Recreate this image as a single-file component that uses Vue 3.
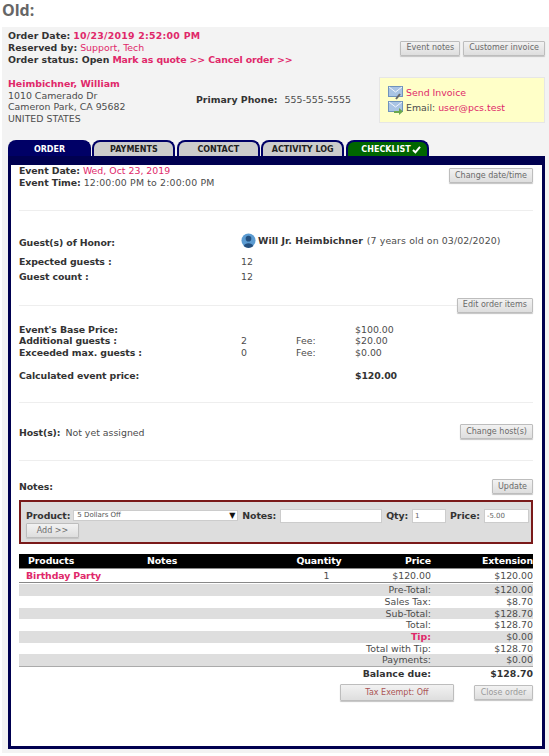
<script setup>
const tabs = [
  { name: 'ORDER', cls: 'active' },
  { name: 'PAYMENTS', cls: '' },
  { name: 'CONTACT', cls: '' },
  { name: 'ACTIVITY LOG', cls: '' },
  { name: 'CHECKLIST', cls: 'done', check: true },
]

const fees = [
  { label: "Event's Base Price:", qty: '', fee: '', price: '$100.00' },
  { label: 'Additional guests :', qty: '2', fee: 'Fee:', price: '$20.00' },
  { label: 'Exceeded max. guests :', qty: '0', fee: 'Fee:', price: '$0.00' },
]

const totals = [
  { label: 'Pre-Total:', value: '$120.00', cls: 'shade first' },
  { label: 'Sales Tax:', value: '$8.70', cls: '' },
  { label: 'Sub-Total:', value: '$128.70', cls: 'shade' },
  { label: 'Total:', value: '$128.70', cls: '' },
  { label: 'Tip:', value: '$0.00', cls: 'shade tip' },
  { label: 'Total with Tip:', value: '$128.70', cls: '' },
  { label: 'Payments:', value: '$0.00', cls: 'shade last' },
  { label: 'Balance due:', value: '$128.70', cls: 'balance' },
]
</script>

<template>
  <div class="page">
    <h2 class="title">Old:</h2>
    <div class="panel">
      <div class="top">
        <div class="lines">
          <div><b>Order Date:</b> <b class="pink date">10/23/2019 2:52:00 PM</b></div>
          <div><b>Reserved by:</b> <span class="pink">Support, Tech</span></div>
          <div><b>Order status: Open</b> <b class="pink links">Mark as quote &gt;&gt; Cancel order &gt;&gt;</b></div>
        </div>
        <div class="top-btns">
          <button class="btn">Event notes</button>
          <button class="btn">Customer invoice</button>
        </div>
      </div>

      <div class="customer">
        <div class="address">
          <b class="pink">Heimbichner, William</b>
          <div>1010 Camerado Dr</div>
          <div>Cameron Park, CA 95682</div>
          <div>UNITED STATES</div>
        </div>
        <div class="phone"><b>Primary Phone:</b><span>555-555-5555</span></div>
        <div class="invoice">
          <div class="inv-row">
            <svg width="15" height="14" viewBox="0 0 15 14">
              <rect x="0.5" y="0.5" width="14" height="10" fill="#a9c4e4" stroke="#6f93bd" />
              <path d="M1 1l6.5 5L14 1" fill="none" stroke="#f2f6fb" />
              <path d="M8 13l4-5" stroke="#666" stroke-width="2" />
            </svg>
            <span class="pink">Send Invoice</span>
          </div>
          <div class="inv-row">
            <svg width="15" height="14" viewBox="0 0 15 14">
              <rect x="0.5" y="0.5" width="14" height="10" fill="#a9c4e4" stroke="#6f93bd" />
              <path d="M1 1l6.5 5L14 1" fill="none" stroke="#f2f6fb" />
              <path d="M6 10h5V7l4 3.5-4 3.5v-2H6z" fill="#6aa84f" />
            </svg>
            <span>Email: <span class="pink">user@pcs.test</span></span>
          </div>
        </div>
      </div>

      <div class="tabs">
        <div v-for="t in tabs" :key="t.name" class="tab" :class="t.cls">
          {{ t.name }}<svg v-if="t.check" class="check" width="9" height="8" viewBox="0 0 9 8"><path d="M1 4l2.4 2.3L8 .8" fill="none" stroke="#fff" stroke-width="2" /></svg>
        </div>
      </div>

      <div class="box">
        <section class="event">
          <div class="lines">
            <div><b>Event Date:</b> <span class="pink">Wed, Oct 23, 2019</span></div>
            <div><b>Event Time:</b> <span class="time">12:00:00 PM to 2:00:00 PM</span></div>
          </div>
          <button class="btn">Change date/time</button>
        </section>
        <hr class="rule first-rule" />

        <div class="honor grid-row">
          <b>Guest(s) of Honor:</b>
          <div class="guest">
            <svg width="15" height="15" viewBox="0 0 16 16">
              <circle cx="8" cy="8" r="7.5" fill="#5b9bd1" />
              <circle cx="8" cy="6" r="3" fill="#24507f" />
              <path d="M3 14c1-4 9-4 10 0a7.5 7.5 0 0 1-10 0z" fill="#24507f" />
            </svg>
            <b>Will Jr. Heimbichner</b> <span>(7 years old on 03/02/2020)</span>
          </div>
        </div>
        <div class="grid-row expected"><b>Expected guests :</b><span>12</span></div>
        <div class="grid-row count"><b>Guest count :</b><span>12</span></div>

        <div class="rule-btn">
          <hr class="rule" />
          <button class="btn">Edit order items</button>
        </div>

        <div class="fees">
          <div v-for="f in fees" :key="f.label" class="fee-row">
            <b>{{ f.label }}</b><span>{{ f.qty }}</span><span>{{ f.fee }}</span><span>{{ f.price }}</span>
          </div>
          <div class="fee-row calc">
            <b>Calculated event price:</b><span></span><span></span><b>$120.00</b>
          </div>
        </div>
        <hr class="rule" />

        <div class="hosts">
          <div class="host-text"><b>Host(s):</b> <span>Not yet assigned</span></div>
          <button class="btn">Change host(s)</button>
        </div>
        <hr class="rule" />

        <div class="notes">
          <b>Notes:</b>
          <button class="btn">Update</button>
        </div>

        <div class="add-box">
          <div class="add-row">
            <b class="product">Product:</b>
            <div class="select"><span>5 Dollars Off</span><i>▼</i></div>
            <b>Notes:</b>
            <input class="input notes-input" />
            <b>Qty:</b>
            <input class="input qty-input" value="1" />
            <b>Price:</b>
            <input class="input price-input" value="-5.00" />
          </div>
          <button class="btn add-btn">Add &gt;&gt;</button>
        </div>

        <div class="items">
          <div class="item-row head">
            <span class="c-name">Products</span>
            <span class="c-notes">Notes</span>
            <span class="c-qty">Quantity</span>
            <span class="c-price">Price</span>
            <span class="c-ext">Extension</span>
          </div>
          <div class="item-row line">
            <b class="c-name pink">Birthday Party</b>
            <span class="c-notes"></span>
            <span class="c-qty">1</span>
            <span class="c-price">$120.00</span>
            <span class="c-ext">$120.00</span>
          </div>
          <div v-for="r in totals" :key="r.label" class="total-row" :class="r.cls">
            <span class="t-label">{{ r.label }}</span>
            <span class="t-value">{{ r.value }}</span>
          </div>
        </div>

        <div class="bottom-btns">
          <button class="btn tax">Tax Exempt: Off</button>
          <button class="btn close">Close order</button>
        </div>
      </div>
    </div>
  </div>
</template>

<style scoped>
.page {
  width: 549px;
  height: 756px;
  overflow: hidden;
  background: #fff;
  font-family: "DejaVu Sans", Verdana, sans-serif;
  font-size: 9.4px;
  line-height: 11.7px;
  color: #4c4c4c;
}
.title {
  margin: 0;
  height: 27px;
  padding-left: 2px;
  font-family: "Open Sans", sans-serif;
  font-size: 16px;
  line-height: 21px;
  font-weight: 700;
  color: #666;
}
.panel {
  margin-left: 2px;
  height: 726px;
  padding: 3px 4px 0 6px;
  box-sizing: border-box;
  background: #f3f3f3;
}
b {
  color: #333;
}
.pink,
b.pink {
  color: #e0286a;
}
.date {
  letter-spacing: 0.25px;
}
.links {
  letter-spacing: -0.12px;
}
.top {
  display: flex;
  justify-content: space-between;
  align-items: center;
  height: 36px;
}
.top-btns {
  display: flex;
  gap: 3px;
}
.btn {
  height: 15px;
  padding: 0 5px;
  border: 1px solid #bdbdbd;
  border-radius: 1px;
  background: linear-gradient(#f2f2f2, #dedede);
  box-shadow: 0 1px 1px #c4c4c4;
  font-family: inherit;
  font-size: 8px;
  line-height: 12px;
  color: #6a6a6a;
  white-space: nowrap;
}
.customer {
  display: flex;
  align-items: flex-start;
  height: 47px;
  margin-top: 11px;
}
.address {
  width: 188px;
  margin-top: 1px;
}
.address div,
.address b {
  display: block;
}
.phone {
  display: flex;
  gap: 7px;
  width: 183px;
  margin-top: 17px;
}
.invoice {
  width: 166px;
  height: 46px;
  box-sizing: border-box;
  padding-left: 8px;
  padding-top: 7px;
  border: 1px solid #e6e6e6;
  background: #ffffc8;
}
.inv-row {
  display: flex;
  align-items: center;
  gap: 3px;
  height: 15px;
}
.tabs {
  display: flex;
  gap: 1.4px;
  height: 16px;
  margin-top: 16px;
}
.tab {
  display: flex;
  justify-content: center;
  align-items: center;
  gap: 1px;
  width: 83px;
  height: 16px;
  box-sizing: border-box;
  padding-top: 1px;
  border: 2px solid #000066;
  border-bottom: 0;
  border-radius: 8px 8px 0 0;
  background: #cccccc;
  font-size: 8px;
  font-weight: 700;
  color: #222;
}
.tab.active {
  background: #000066;
  color: #fff;
}
.tab.done {
  padding-left: 8px;
  background: #006600;
  color: #fff;
}
.box {
  width: 537px;
  height: 593px;
  box-sizing: border-box;
  padding: 0 9px 0 8px;
  border: 3px solid #000050;
  border-top-width: 9px;
  background: #fff;
}
.box b {
  letter-spacing: -0.1px;
}
.event {
  display: flex;
  justify-content: space-between;
  align-items: flex-start;
}
.event .btn {
  margin-top: 3px;
}
.time {
  letter-spacing: 0.15px;
}
.rule {
  margin: 0;
  border: 0;
  border-top: 1px solid #eee;
}
.first-rule {
  margin-top: 22px;
}
.grid-row {
  display: grid;
  grid-template-columns: 222px 1fr;
}
.honor {
  align-items: center;
  margin-top: 26px;
}
.guest {
  display: flex;
  align-items: center;
  gap: 2px;
  white-space: pre;
  margin-top: -5px;
}
.guest b {
  letter-spacing: 0.05px;
}
.guest span {
  margin-left: 2px;
  letter-spacing: 0.1px;
}
.expected {
  margin-top: 7px;
}
.count {
  margin-top: 3.3px;
}
.rule-btn {
  display: flex;
  align-items: center;
  margin-top: 14.7px;
}
.rule-btn .rule {
  flex: 1;
}
.fees {
  margin-top: 11px;
}
.fee-row {
  display: grid;
  grid-template-columns: 222px 55px 59px 1fr;
}
.calc {
  margin-top: 11px;
}
.fees + .rule {
  margin-top: 21px;
}
.hosts {
  display: flex;
  justify-content: space-between;
  align-items: flex-start;
  height: 57px;
  padding-top: 21px;
  box-sizing: border-box;
}
.host-text {
  margin-top: 3px;
}
.host-text span {
  margin-left: 2px;
}
.notes {
  display: flex;
  justify-content: space-between;
  align-items: center;
  margin-top: 18px;
}
.add-box {
  height: 44px;
  box-sizing: border-box;
  margin-top: 6px;
  padding: 6px 4px 6px 5px;
  border: 2px solid #7a1a1a;
  background: #dddddd;
}
.add-row {
  display: flex;
  align-items: center;
  gap: 4px;
  height: 15px;
}
.add-row > * {
  flex: none;
}
.product {
  margin-right: -1px;
}
.select {
  display: flex;
  justify-content: space-between;
  align-items: center;
  width: 165px;
  height: 11px;
  box-sizing: border-box;
  padding: 0 2px 0 3px;
  border: 1px solid #ccc;
  background: #fff;
  font-size: 7px;
  color: #555;
}
.select i {
  font-style: normal;
  font-size: 8px;
  color: #111;
}
.input {
  height: 14px;
  box-sizing: border-box;
  padding: 0 2px;
  border: 1px solid #ccc;
  background: #fff;
  font-family: inherit;
  font-size: 7px;
  color: #666;
}
.notes-input {
  width: 102px;
}
.qty-input {
  width: 34px;
}
.price-input {
  width: 45px;
}
.add-btn {
  display: block;
  width: 53px;
}
.items {
  margin-top: 10px;
}
.item-row {
  display: flex;
}
.head {
  height: 14px;
  align-items: center;
  background: #000;
  color: #fff;
  font-weight: 700;
  border-bottom: 1px solid #888;
  letter-spacing: -0.1px;
}
.line {
  height: 14px;
  box-sizing: border-box;
  align-items: center;
  border-bottom: 1px solid #888;
}
.c-name {
  width: 128px;
  padding-left: 7px;
  box-sizing: border-box;
}
.head .c-name {
  padding-left: 9px;
}
.c-notes {
  width: 122px;
}
.c-qty {
  width: 100px;
  text-align: center;
}
.line .c-qty {
  padding-left: 15px;
  box-sizing: border-box;
}
.c-price {
  width: 62px;
  text-align: right;
}
.c-ext {
  flex: 1;
  text-align: right;
}
.total-row {
  display: flex;
  justify-content: flex-end;
  height: 11.7px;
  align-items: center;
}
.first {
  margin-top: 1px;
}
.t-label {
  text-align: right;
}
.t-value {
  width: 102px;
  text-align: right;
}
.shade {
  background: #dedede;
}
.tip .t-label {
  color: #e0286a;
  font-weight: 700;
}
.last {
  border-bottom: 1px solid #aaa;
}
.balance {
  height: 13px;
  font-weight: 700;
  color: #333;
}
.bottom-btns {
  display: flex;
  justify-content: flex-end;
  gap: 20px;
  margin-top: 4px;
}
.tax {
  width: 114px;
  height: 17px;
  color: #a55;
}
.close {
  width: 59px;
  color: #999;
  margin-top: 1px;
}
</style>
